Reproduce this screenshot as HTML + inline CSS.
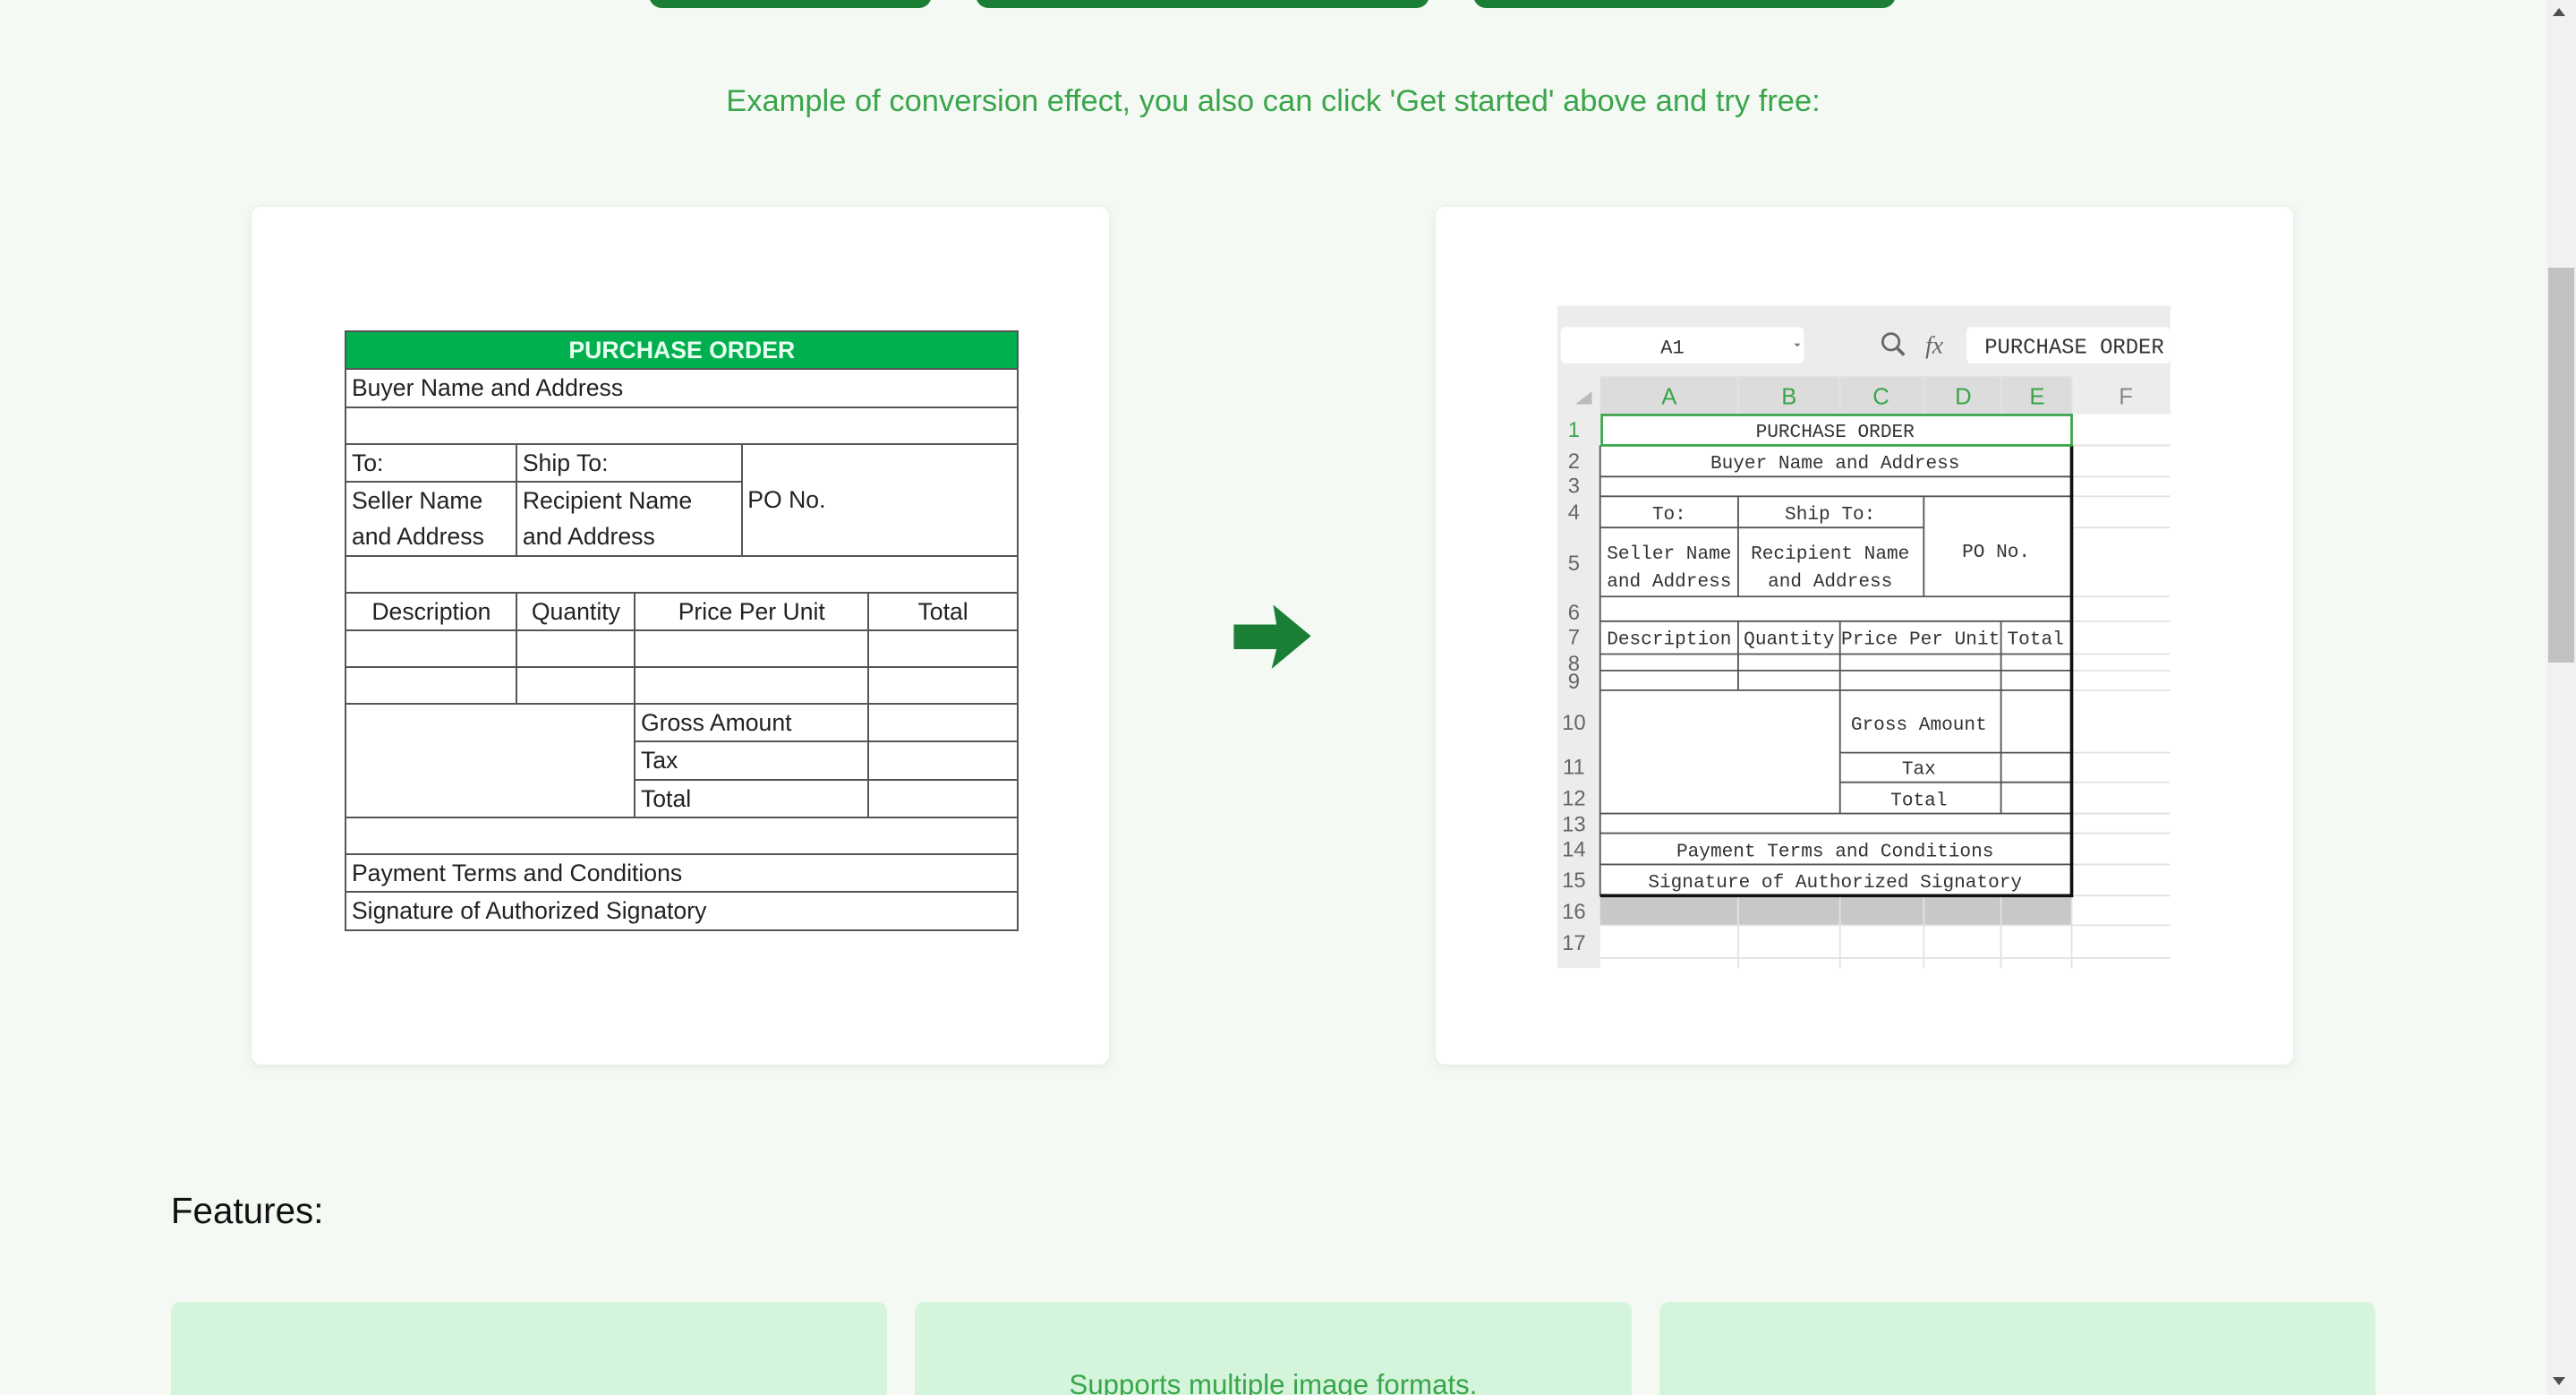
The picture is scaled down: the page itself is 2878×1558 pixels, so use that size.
<!DOCTYPE html>
<html><head><meta charset="utf-8"><style>
html,body{margin:0;padding:0;}
body{width:2878px;height:1558px;overflow:hidden;background:#f4f9f4;font-family:"Liberation Sans",sans-serif;}
#p{zoom:1.83546;position:relative;width:1568px;height:849px;overflow:hidden;}
.a{position:absolute;}
.btn{top:-10px;height:15px;background:#1a7f35;border-radius:0 0 8px 8px;}
.card{background:#fff;border-radius:6px;box-shadow:0 1px 6px rgba(0,0,0,.08);width:522px;height:522px;top:126px;}
table.po{border-collapse:collapse;table-layout:fixed;position:absolute;left:210px;top:201px;width:410px;font-size:14.5px;color:#222;}
table.po td{border:1.5px solid #555;height:21.2px;padding:0 3px;line-height:22px;white-space:nowrap;overflow:hidden;}
table.po td.c{text-align:center;}
.fc{top:792px;width:436px;height:80px;background:#d4f5dc;border-radius:6px;}
</style></head><body><div id="p">
<div class="a btn" style="left:395px;width:172px"></div>
<div class="a btn" style="left:594px;width:276px"></div>
<div class="a btn" style="left:897px;width:257px"></div>
<div class="a" style="left:0;width:1550px;top:51px;text-align:center;color:#3aa54a;font-size:18.8px">Example of conversion effect, you also can click 'Get started' above and try free:</div>
<div class="a card" style="left:153px"></div>
<div class="a card" style="left:874px"></div>
<table class="po">
<colgroup><col style="width:104px"><col style="width:72px"><col style="width:65px"><col style="width:77px"><col style="width:91px"></colgroup>
<tr><td colspan="5" class="c" style="background:#00b04f;color:#e8fff0;font-weight:bold;">PURCHASE ORDER</td></tr>
<tr><td colspan="5">Buyer Name and Address</td></tr>
<tr><td colspan="5"></td></tr>
<tr><td>To:</td><td colspan="2">Ship To:</td><td colspan="2" rowspan="2">PO No.</td></tr>
<tr><td style="height:44px;line-height:22px;white-space:normal">Seller Name<br>and Address</td><td colspan="2" style="line-height:22px;white-space:normal">Recipient Name<br>and Address</td></tr>
<tr><td colspan="5"></td></tr>
<tr><td class="c">Description</td><td class="c">Quantity</td><td colspan="2" class="c">Price Per Unit</td><td class="c">Total</td></tr>
<tr><td></td><td></td><td colspan="2"></td><td></td></tr>
<tr><td></td><td></td><td colspan="2"></td><td></td></tr>
<tr><td colspan="2" rowspan="3"></td><td colspan="2">Gross Amount</td><td></td></tr>
<tr><td colspan="2">Tax</td><td></td></tr>
<tr><td colspan="2">Total</td><td></td></tr>
<tr><td colspan="5"></td></tr>
<tr><td colspan="5">Payment Terms and Conditions</td></tr>
<tr><td colspan="5">Signature of Authorized Signatory</td></tr>
</table>
<svg class="a" style="left:0;top:0" width="1568" height="849" viewBox="0 0 1568 849">
<polygon points="751,380 777,380 775,368 798,387 774,407 777,395 751,395" fill="#1a7f35"/>
<g font-family="Liberation Mono, monospace" font-size="12" fill="#333">
<rect x="948" y="186" width="373" height="403" fill="#fff"/>
<rect x="948" y="186" width="373" height="43" fill="#ececec"/>
<rect x="950" y="199" width="148" height="22" rx="3" fill="#fff"/>
<text x="1018" y="215" text-anchor="middle">A1</text>
<path d="M1092 209l2 2 2-2z" fill="#777"/>
<circle cx="1151" cy="208" r="5" fill="none" stroke="#666" stroke-width="1.5"/><path d="M1155 212l4 4" stroke="#666" stroke-width="2"/>
<text x="1172" y="215" font-family="Liberation Serif,serif" font-style="italic" font-size="15" fill="#666">fx</text>
<rect x="1197" y="199" width="124" height="22" rx="3" fill="#fff"/>
<text x="1208" y="215" font-size="13">PURCHASE ORDER</text>
<rect x="948" y="229" width="373" height="23" fill="#ececec"/>
<rect x="974" y="229" width="287" height="23" fill="#dcdcdc"/>
<path d="M959 246h10v-8z" fill="#bbb"/>
<g font-family="Liberation Sans,sans-serif" font-size="14" fill="#3aa54a" text-anchor="middle">
<text x="1016" y="246">A</text><text x="1089" y="246">B</text><text x="1145" y="246">C</text><text x="1195" y="246">D</text><text x="1240" y="246">E</text><text x="1294" y="246" fill="#888">F</text></g>
<rect x="948" y="252" width="26" height="337" fill="#ececec"/>
<rect x="974" y="545" width="287" height="18" fill="#c8c8c8"/>
<g stroke="#e2e2e2" stroke-width="1">
<path d="M1261 271H1321M1261 290H1321M1261 302H1321M1261 321H1321M1261 363H1321M1261 378H1321M1261 398H1321M1261 408H1321M1261 420H1321M1261 458H1321M1261 476H1321M1261 495H1321M1261 507H1321M1261 526H1321M974 545H1321M974 563H1321M974 583H1321"/>
<path d="M1058 229V252M1120 229V252M1171 229V252M1218 229V252M1261 229V589M1058 545V589M1120 545V589M1171 545V589M1218 545V589"/>
</g>
<g stroke="#555" stroke-width="1">
<path d="M974 290H1261M974 302H1261M974 363H1261M974 378H1261M974 495H1261M974 507H1261M974 526H1261M974 321H1171M974 398H1261M974 408H1261M974 420H1261M1120 458H1261M1120 476H1261"/>
<path d="M1058 302V363M1171 302V363M1058 378V420M1120 378V495M1218 378V495M974 271V545"/>
</g>
<path d="M974 545H1261V271" stroke="#111" stroke-width="2" fill="none"/>
<rect x="975" y="252.5" width="286" height="18.5" fill="none" stroke="#3aa54a" stroke-width="1.5"/>
<g font-family="Liberation Sans,sans-serif" font-size="13" fill="#666" text-anchor="middle">
<text x="958" y="266" fill="#3aa54a">1</text><text x="958" y="285">2</text><text x="958" y="300">3</text><text x="958" y="316">4</text><text x="958" y="347">5</text><text x="958" y="377">6</text><text x="958" y="392">7</text><text x="958" y="408">8</text><text x="958" y="419">9</text><text x="958" y="444">10</text><text x="958" y="471">11</text><text x="958" y="490">12</text><text x="958" y="506">13</text><text x="958" y="521">14</text><text x="958" y="540">15</text><text x="958" y="559">16</text><text x="958" y="578">17</text></g>
<g text-anchor="middle" font-size="11.5">
<text x="1117" y="266">PURCHASE ORDER</text>
<text x="1117" y="285">Buyer Name and Address</text>
<text x="1016" y="316">To:</text><text x="1114" y="316">Ship To:</text>
<text x="1016" y="340">Seller Name</text><text x="1016" y="357">and Address</text>
<text x="1114" y="340">Recipient Name</text><text x="1114" y="357">and Address</text>
<text x="1215" y="339">PO No.</text>
<text x="1016" y="392">Description</text><text x="1089" y="392">Quantity</text><text x="1169" y="392">Price Per Unit</text><text x="1239" y="392">Total</text>
<text x="1168" y="444">Gross Amount</text><text x="1168" y="471">Tax</text><text x="1168" y="490">Total</text>
<text x="1117" y="521">Payment Terms and Conditions</text>
<text x="1117" y="540">Signature of Authorized Signatory</text>
</g></g>
</svg>
<div class="a" style="left:104px;top:724px;font-size:22px;color:#111">Features:</div>
<div class="a fc" style="left:104px"></div>
<div class="a fc" style="left:557px"><div style="text-align:center;margin-top:41px;color:#3aa54a;font-size:17px">Supports multiple image formats.</div></div>
<div class="a fc" style="left:1010px"></div>
<div class="a" style="left:1550px;top:0;width:18px;height:849px;background:#f1f1f1"></div>
<div class="a" style="left:1551px;top:163px;width:16px;height:240px;background:#c1c1c1"></div>
<div class="a" style="left:1554px;top:5px;width:0;height:0;border-left:4px solid transparent;border-right:4px solid transparent;border-bottom:5px solid #505050"></div>
<div class="a" style="left:1554px;top:838px;width:0;height:0;border-left:4px solid transparent;border-right:4px solid transparent;border-top:5px solid #505050"></div>
</div></body></html>
